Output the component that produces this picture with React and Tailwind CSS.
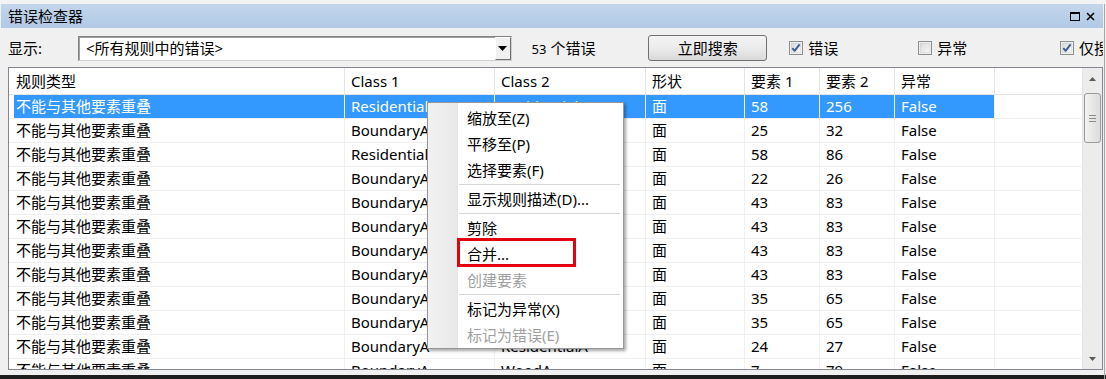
import React from "react";

const FONT = { fontFamily: '"Noto Sans", "Noto Sans CJK SC", sans-serif' };

const cols = [
  { w: "w-[331px]", pl: "pl-[2px]" },
  { w: "w-[150px]", pl: "pl-[6px]" },
  { w: "w-[151px]", pl: "pl-[6px]" },
  { w: "w-[99px]", pl: "pl-[6px]" },
  { w: "w-[75px]", pl: "pl-[6px]" },
  { w: "w-[75px]", pl: "pl-[6px]" },
  { w: "w-[100px]", pl: "pl-[6px]" },
];

const header = ["规则类型", "Class 1", "Class 2", "形状", "要素 1", "要素 2", "异常"];

const R = "不能与其他要素重叠";
const rows = [
  [R, "ResidentialA", "ResidentialA", "面", "58", "256", "False"],
  [R, "BoundaryA", "ResidentialA", "面", "25", "32", "False"],
  [R, "ResidentialA", "ResidentialA", "面", "58", "86", "False"],
  [R, "BoundaryA", "ResidentialA", "面", "22", "26", "False"],
  [R, "BoundaryA", "ResidentialA", "面", "43", "83", "False"],
  [R, "BoundaryA", "ResidentialA", "面", "43", "83", "False"],
  [R, "BoundaryA", "ResidentialA", "面", "43", "83", "False"],
  [R, "BoundaryA", "ResidentialA", "面", "43", "83", "False"],
  [R, "BoundaryA", "ResidentialA", "面", "35", "65", "False"],
  [R, "BoundaryA", "ResidentialA", "面", "35", "65", "False"],
  [R, "BoundaryA", "ResidentialA", "面", "24", "27", "False"],
  [R, "BoundaryA", "WoodA", "面", "7", "79", "False"],
];

function CheckBox({ checked }) {
  return (
    <svg width="14" height="14" viewBox="0 0 14 14" className="shrink-0">
      <defs>
        <linearGradient id={checked ? "cbg1" : "cbg0"} x1="0" y1="0" x2="1" y2="1">
          <stop offset="0" stopColor="#d8d8d8" />
          <stop offset="1" stopColor="#fafafa" />
        </linearGradient>
      </defs>
      <rect x="0.5" y="0.5" width="13" height="13" fill="#ffffff" stroke="#8e8f8f" />
      <rect x="2" y="2" width="10" height="10" fill={`url(#${checked ? "cbg1" : "cbg0"})`} stroke="#c4c4c4" strokeWidth="0.6" />
      {checked && (
        <path d="M3.3 7.2 L5.6 9.8 L10.6 3.4" fill="none" stroke="#3d5a9a" strokeWidth="1.9" strokeLinejoin="round" />
      )}
    </svg>
  );
}

function MenuItem({ children, disabled }) {
  return (
    <div className={`h-[26px] flex items-center pl-[39px] text-[15px] ${disabled ? "text-[#a0a0a0]" : "text-black"}`}>
      {children}
    </div>
  );
}

function MenuSep() {
  return (
    <div className="h-[3px] flex flex-col justify-center pl-[31px] pr-[3px]">
      <div className="h-px bg-[#d7d7d7]" />
      <div className="h-px bg-white" />
    </div>
  );
}

export default function App() {
  return (
    <div className="relative w-[1106px] h-[379px] overflow-hidden bg-[#f0f0f0] flex flex-col" style={FONT}>
      {/* top strip */}
      <div className="h-[4px] bg-[#f3f3f3] shrink-0" />
      {/* title bar */}
      <div className="h-[24px] shrink-0 flex items-center justify-between pl-[7px] pr-[8px] bg-gradient-to-b from-[#c3d6ec] to-[#b0c9e5] mr-[3px] ml-[1px]">
        <span className="text-[15px] text-black leading-none">错误检查器</span>
        <div className="flex items-center gap-[6px]">
          <div className="w-[10px] h-[9px] border-[1.5px] border-black border-t-[2px]" />
          <svg width="9" height="9" viewBox="0 0 9 9">
            <path d="M1 1 L8 8 M8 1 L1 8" stroke="#000" strokeWidth="1.6" />
          </svg>
        </div>
      </div>
      {/* toolbar */}
      <div className="h-[39px] shrink-0 flex items-center pl-[8px] pt-[1px] mr-[3px]">
        <span className="text-[15px] w-[70px] text-black">显示:</span>
        <div className="w-[434px] h-[25px] flex border border-[#828282] border-r-[#d0d0d0] border-b-[#d0d0d0] bg-white">
          <div className="flex-1 flex items-center pl-[6px] text-[15px] text-black border-t border-l border-[#a0a0a0]">&lt;所有规则中的错误&gt;</div>
          <div className="w-[16px] h-[23px] flex items-center justify-center bg-[#f0f0f0] border-t border-l border-white border-r border-b border-r-[#6f6f6f] border-b-[#6f6f6f]">
            <svg width="9" height="5" viewBox="0 0 9 5"><path d="M0 0 L9 0 L4.5 5 Z" fill="#000" /></svg>
          </div>
        </div>
        <div className="ml-[20px] w-[117px] flex items-baseline text-black">
          <span className="text-[13px]">53</span>
          <span className="text-[15px] ml-[4px]">个错误</span>
        </div>
        <button className="w-[119px] h-[26px] rounded-[3px] border border-[#707070] bg-gradient-to-b from-[#f4f4f4] via-[#ebebeb] to-[#d9d9d9] text-[15px] text-black flex items-center justify-center">
          立即搜索
        </button>
        <div className="ml-[22px] w-[129px] flex items-center gap-[5px] text-[15px] text-black">
          <CheckBox checked />
          <span>错误</span>
        </div>
        <div className="w-[142px] flex items-center gap-[5px] text-[15px] text-black">
          <CheckBox />
          <span>异常</span>
        </div>
        <div className="flex items-center gap-[5px] text-[15px] text-black whitespace-nowrap overflow-hidden w-[43px]">
          <CheckBox checked />
          <span>仅搜</span>
        </div>
      </div>
      {/* table */}
      <div className="ml-[8px] w-[1095px] h-[303px] shrink-0 border border-[#828790] bg-white flex overflow-hidden">
        <div className="flex flex-col w-[1073px] overflow-hidden">
          {/* header */}
          <div className="h-[27px] shrink-0 flex border-b border-[#e5e5e5]">
            <div className="w-[5px]" />
            {header.map((h, i) => (
              <div key={i} className={`${cols[i].w} ${cols[i].pl} h-full flex items-center text-[15px] text-black border-r border-[#e5e5e5] whitespace-nowrap`}>
                {h}
              </div>
            ))}
            <div className="flex-1" />
          </div>
          {/* rows */}
          {rows.map((r, ri) => {
            const sel = ri === 0;
            return (
              <div key={ri} className="h-[24px] shrink-0 flex border-b border-[#f0f0f0]">
                <div className="w-[5px]" />
                {r.map((c, ci) => (
                  <div
                    key={ci}
                    className={`${cols[ci].w} ${cols[ci].pl} h-full flex items-center text-[15px] whitespace-nowrap overflow-hidden border-r ${sel ? "bg-[#3399ff] text-white border-[#f0f0f0]" : "text-black border-[#f0f0f0]"}`}
                  >
                    {c}
                  </div>
                ))}
                <div className="flex-1" />
              </div>
            );
          })}
        </div>
        {/* scrollbar */}
        <div className="w-[20px] h-full bg-[#ececec] flex flex-col border-l border-[#e6e6e6]">
          <div className="h-[21px] flex items-center justify-center">
            <svg width="7" height="4" viewBox="0 0 7 4"><path d="M0 4 L7 4 L3.5 0 Z" fill="#5c5c5c" /></svg>
          </div>
          <div className="h-[4px]" />
          <div className="mx-[1px] h-[50px] rounded-[3px] border border-[#9a9a9a] bg-gradient-to-r from-[#f3f3f3] to-[#dcdcdc] flex flex-col items-center justify-center gap-[2px]">
            <div className="w-[7px] h-px bg-[#8a8a8a]" />
            <div className="w-[7px] h-px bg-[#8a8a8a]" />
            <div className="w-[7px] h-px bg-[#8a8a8a]" />
          </div>
          <div className="flex-1" />
          <div className="h-[21px] flex items-center justify-center">
            <svg width="7" height="4" viewBox="0 0 7 4"><path d="M0 0 L7 0 L3.5 4 Z" fill="#5c5c5c" /></svg>
          </div>
        </div>
      </div>
      <div className="flex-1" />
      <div className="h-[4px] shrink-0 bg-[#1e1e1e]" />
      {/* right window edge */}
      <div className="absolute top-[4px] right-[1px] w-px h-full bg-[#a6a6a6]" />

      {/* context menu */}
      <div className="absolute left-[427px] top-[102px] w-[197px] h-[247px] bg-white border border-[#979797] shadow-[2px_2px_3px_rgba(0,0,0,0.35)] overflow-hidden">
        <div className="absolute left-0 top-0 w-[30px] h-full bg-gradient-to-r from-[#f1f1f1] to-[#e9e9e9] border-r border-[#e2e3e3]" />
        <div className="absolute left-[31px] top-0 w-px h-full bg-white" />
        <div className="relative pt-[2px]">
          <MenuItem>缩放至(Z)</MenuItem>
          <MenuItem>平移至(P)</MenuItem>
          <MenuItem>选择要素(F)</MenuItem>
          <MenuSep />
          <MenuItem>显示规则描述(D)...</MenuItem>
          <MenuSep />
          <MenuItem>剪除</MenuItem>
          <MenuItem>合并...</MenuItem>
          <MenuItem disabled>创建要素</MenuItem>
          <MenuSep />
          <MenuItem>标记为异常(X)</MenuItem>
          <MenuItem disabled>标记为错误(E)</MenuItem>
        </div>
      </div>
      {/* red highlight box */}
      <div className="absolute left-[457px] top-[238px] w-[119px] h-[29px] border-[3px] border-[#e3000f]" />
    </div>
  );
}
